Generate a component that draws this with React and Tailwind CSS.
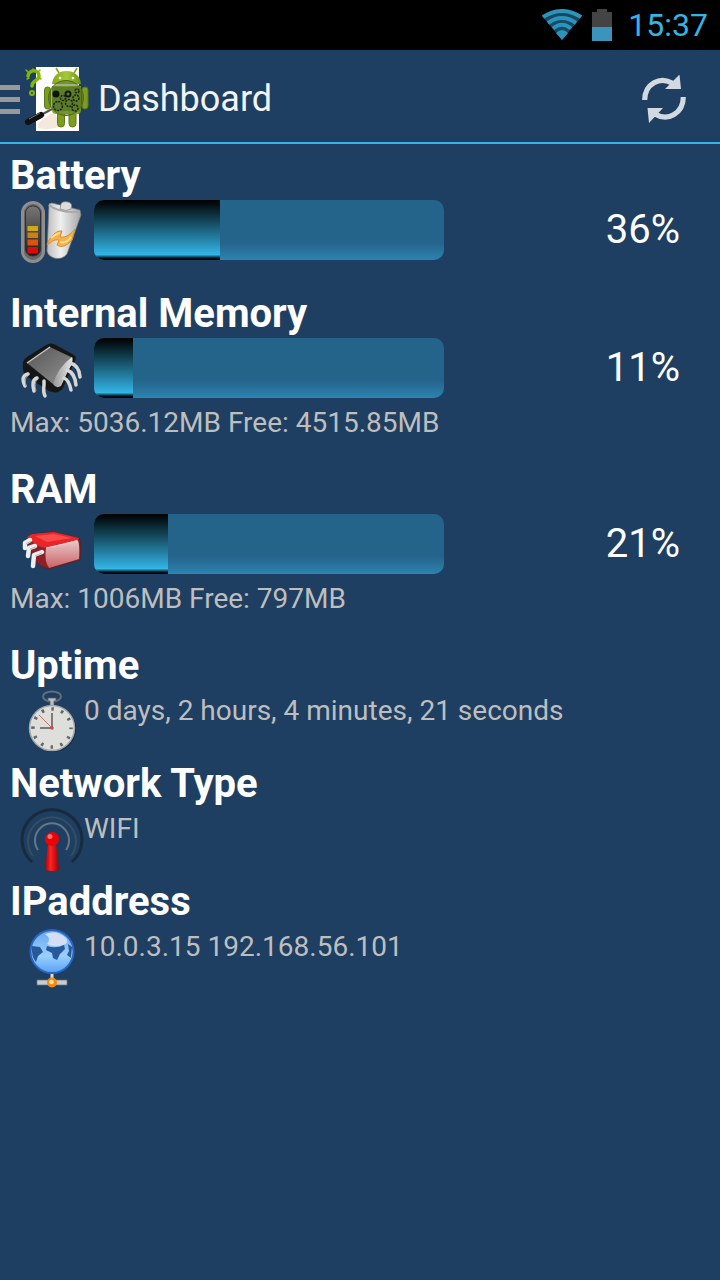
import React from "react";

function WifiIcon() {
  return (
    <svg className="h-8 w-10" viewBox="0 0 40 32" fill="none" aria-hidden="true">
      <path d="M0 7Q20 -5 40 7L20 31Z" fill="#174a60" />
      <g stroke="#2c93bd" strokeWidth="4">
        <path d="M1 8Q20 -4 39 8" />
        <path d="M6 14Q20 4 34 14" />
        <path d="M11 19.500Q20 12 29 19.500" />
      </g>
      <path d="M14 24Q20 18 26 24L20 31Z" fill="#2c93bd" />
    </svg>
  );
}

function StatusBatteryIcon() {
  return (
    <svg className="h-8 w-5" viewBox="0 0 20 32" aria-hidden="true">
      <path d="M0 3H5V0H15V3H20V18H0Z" fill="#444" />
      <path d="M0 18H20V32H0Z" fill="#3a94bb" />
    </svg>
  );
}

function LogoIcon() {
  return (
    <svg className="h-16 w-[66px]" viewBox="0 0 66 64" fill="none" aria-hidden="true">
      <defs>
        <linearGradient id="droid" x1="0" x2="1">
          <stop offset="0" stopColor="#86a51b" />
          <stop offset=".5" stopColor="#a5c936" />
          <stop offset="1" stopColor="#6f9411" />
        </linearGradient>
      </defs>
      <rect x="12" width="43" height="64" fill="#fff" />
      <path d="M14 57Q22 48 30 46L38 58Q28 64 14 61Z" fill="#f5e8dd" />
      <g stroke="#82b800" strokeLinecap="round">
        <path d="M4 9C5 2 15 2 15 9C15 14 8 13 8 19" strokeWidth="3.500" />
        <path d="M4 5L2 3M9 4V2M14 5L16 3M15 11L17 12M5 11L3 12" strokeWidth="1.500" />
        <circle cx="8" cy="26" r="2" strokeWidth="2" />
      </g>
      <path d="M35 6L32 1M50 6L53 1" stroke="#80a319" strokeWidth="1.500" />
      <path d="M28 17C29 8 35 4 42.500 4S56 8 57 17Z" fill="url(#droid)" />
      <circle cx="36" cy="11" r="1.300" fill="#fff" />
      <circle cx="49" cy="11" r="1.300" fill="#fff" />
      <g fill="#7c9d20" stroke="#5d7915">
        <rect x="20.500" y="20" width="6" height="22" rx="3" />
        <rect x="58" y="20" width="6" height="22" rx="3" />
        <rect x="33.500" y="40" width="7" height="20" rx="3.500" />
        <rect x="45" y="40" width="7" height="20" rx="3.500" />
      </g>
      <path d="M28 19H57V43Q57 47 53 47H32Q28 47 28 43Z" fill="url(#droid)" />
      <circle cx="42" cy="31" r="17.500" fill="#526f22" fillOpacity=".55" stroke="#526b21" />
      <path d="M28 20H56V44H30L28 39Z" fill="#5e7d2b" />
      <g stroke="#17220d" strokeWidth="1.500" strokeDasharray="2 1">
        <circle cx="34" cy="39" r="4.500" />
        <circle cx="45" cy="36" r="3.500" />
        <circle cx="52" cy="31" r="3" />
        <circle cx="51" cy="41" r="3" />
        <circle cx="39" cy="31" r="2.500" />
        <circle cx="53" cy="24" r="2" />
      </g>
      <circle cx="32" cy="27" r="3.500" fill="#0d1408" />
      <circle cx="44" cy="27" r="2.500" stroke="#10180a" strokeWidth="2" />
      <path d="M28 42L17 48" stroke="#555" strokeWidth="2" />
      <path d="M17 48L4 55" stroke="#111" strokeWidth="6" strokeLinecap="round" />
      <path d="M16 46L5 52" stroke="#777" />
    </svg>
  );
}

function RefreshIcon() {
  return (
    <svg className="size-12" viewBox="0 0 48 48" fill="none" aria-hidden="true">
      <path d="M4.700 25C4.700 9 20 .5 33 8.500" stroke="#d2d9e0" strokeWidth="5.200" />
      <path d="M43.300 22C43.300 38 28 47 15 39" stroke="#d2d9e0" strokeWidth="5.200" />
      <path d="M39.500 -.5L41 14H25Z M9 48L7.500 33H23Z" fill="#d2d9e0" />
    </svg>
  );
}

function BatteryIcon() {
  return (
    <svg className="size-16" viewBox="0 0 64 64" fill="none" aria-hidden="true">
      <defs>
        <linearGradient id="cell" x1="0" x2="1">
          <stop offset="0" stopColor="#bcbcbc" />
          <stop offset=".4" stopColor="#f0f0f0" />
          <stop offset="1" stopColor="#a5a5a5" />
        </linearGradient>
        <linearGradient id="well" x1="0" x2="0" y1="0" y2="1">
          <stop offset="0" stopColor="#777" />
          <stop offset="1" stopColor="#1c1c1c" />
        </linearGradient>
      </defs>
      <rect x="2.500" y="2.500" width="21" height="59" rx="10.500" fill="#666" stroke="#8e8e8e" strokeWidth="3" />
      <rect x="5.500" y="6" width="15" height="50" rx="7" fill="url(#well)" stroke="#303030" />
      <rect x="7.500" y="26" width="10.500" height="5" fill="#cba91d" />
      <rect x="7.500" y="32.500" width="10.500" height="5.500" fill="#d37c10" />
      <rect x="7.500" y="39.500" width="10.500" height="6" fill="#de520c" />
      <rect x="7.500" y="47" width="10.500" height="6.500" rx="1" fill="#e00909" />
      <path d="M29 4Q31 2 36 4L60 10L61 15L47 54Q42 60 34 58Q28 56 27 51Z" fill="url(#cell)" stroke="#777" strokeWidth=".7" />
      <path d="M29 5Q38 13 60 12" stroke="#aaa" strokeWidth="2" />
      <path d="M41 4Q42 1 48 2Q53 3 51 9Q46 12 40 9Z" fill="#ddd" stroke="#888" strokeWidth=".8" />
      <path d="M27 45C30 36 37 30 42 31L40 37C46 38 51 34 55 29L52 40C47 46 41 48 37 45L39 40C34 39 31 42 27 45Z" fill="#f6b24a" stroke="#de8b1e" />
      <path d="M31 38Q37 33 40 33M40 42Q46 44 51 37" stroke="#ffdb90" strokeWidth="2" />
    </svg>
  );
}

function ChipIcon() {
  return (
    <svg className="size-16" viewBox="0 0 64 64" fill="none" aria-hidden="true">
      <defs>
        <linearGradient id="chip" x1="0" y1="0" x2="1" y2="1">
          <stop offset="0" stopColor="#555" />
          <stop offset="1" stopColor="#929292" />
        </linearGradient>
        <linearGradient id="chipSide" x1="0" y1="0" x2="1" y2="0">
          <stop offset="0" stopColor="#999" />
          <stop offset="1" stopColor="#e6e6e6" />
        </linearGradient>
      </defs>
      <path d="M3 25Q3 22 7 19L26 7Q31 4 36 7L54 17Q57 19 55 23L43 50Q38 57 29 53L6 38Q2 34 3 25Z" fill="#161616" />
      <path d="M7 25L30 9L53 20L33 46Z" fill="url(#chip)" />
      <path d="M7 25L30 9" stroke="#c9c9c9" strokeWidth="1.500" />
      <path d="M33 46Q38 29 52 19Q54 24 48 33L41 48Q36 51 33 46Z" fill="url(#chipSide)" />
      <g stroke="#d6d6d6" strokeWidth="3.500" strokeLinecap="round">
        <path d="M8 36Q0 38 5 48" />
        <path d="M17 40Q11 42 14 53" />
        <path d="M24 43V47Q23 54 25 58" />
        <path d="M50 25Q59 27 60 39" />
        <path d="M47 32Q55 35 56 47" />
        <path d="M44 40Q49 42 51 52" />
      </g>
      <path d="M8 38Q4 39 6 48M17 42Q14 45 16 53" stroke="#999" />
    </svg>
  );
}

function RamIcon() {
  return (
    <svg className="size-16" viewBox="0 0 64 64" fill="none" aria-hidden="true">
      <defs>
        <linearGradient id="ram" x1="0" x2="0" y1="0" y2="1">
          <stop offset="0" stopColor="#e9caca" />
          <stop offset="1" stopColor="#cc6266" />
        </linearGradient>
      </defs>
      <path d="M7 23L12 20L34 18L59 24Q62 29 60 46L28 55Q20 53 13 45Z" fill="#8d2027" stroke="#502027" strokeWidth=".7" />
      <path d="M7 23L12 20L34 18L59 24L57 27L25 34Q15 32 7 23Z" fill="#e9252a" />
      <path d="M15 22L34 20L52 24L27 28Z" fill="#fa4a4a" />
      <path d="M26 34L57 26Q60 27 59 45L29 54Q24 47 26 34Z" fill="url(#ram)" />
      <path d="M26 34L57 27" stroke="#f5d5d5" />
      <g stroke="#eee" strokeWidth="4.500" strokeLinecap="round" strokeLinejoin="round">
        <path d="M10 26L5 29L5 34" />
        <path d="M15 32L9 34L8 42" />
        <path d="M22 38L14 41L13 52" />
      </g>
      <path d="M11 27L6 30M16 33L10 35M22 39L15 42" stroke="#b5b5b5" />
    </svg>
  );
}

function StopwatchIcon() {
  return (
    <svg className="size-16" viewBox="0 0 64 64" fill="none" aria-hidden="true">
      <ellipse cx="32" cy="6.500" rx="9" ry="5" stroke="#627078" strokeWidth="2" />
      <path d="M28 8H36V11H34V16H30V11H28Z" fill="#b9bec1" stroke="#556" strokeWidth=".8" />
      <circle cx="33" cy="39" r="23" fill="#112a42" />
      <circle cx="32" cy="38" r="22.500" fill="#dededb" stroke="#a3a7a8" strokeWidth="1.500" />
      <circle cx="32" cy="38" r="19" stroke="#62686b" strokeWidth="3.500" strokeDasharray="2.500 7.450" strokeDashoffset="1.250" />
      <path d="M32 38V23M32 38H20" stroke="#5b5b5b" strokeWidth="1.500" />
      <path d="M32 38L19 25" stroke="#bc7676" />
      <circle cx="32" cy="38" r="1.700" fill="#d24343" />
    </svg>
  );
}

function AntennaIcon() {
  return (
    <svg className="size-16" viewBox="0 0 64 64" fill="none" aria-hidden="true">
      <defs>
        <linearGradient id="mast" x1="0" x2="1">
          <stop offset="0" stopColor="#a90000" />
          <stop offset=".4" stopColor="#ff2424" />
          <stop offset="1" stopColor="#9b0000" />
        </linearGradient>
      </defs>
      <path d="M12 54A30 30 0 1 1 52 54" stroke="#172b3d" strokeWidth="3" />
      <path d="M13 48A24 24 0 1 1 51 48" stroke="#354d60" strokeWidth="2" />
      <path d="M18 42A17 17 0 1 1 46 42" stroke="#657783" strokeWidth="2" />
      <path d="M28 36H36L39 62Q32 64 25 62Z" fill="url(#mast)" />
      <circle cx="32" cy="31" r="7" fill="#e90505" />
      <circle cx="30" cy="28.500" r="2.500" fill="#ff7070" />
    </svg>
  );
}

function GlobeIcon() {
  return (
    <svg className="size-16" viewBox="0 0 64 64" fill="none" aria-hidden="true">
      <defs>
        <linearGradient id="sea" x1="0" x2="0" y1="0" y2="1">
          <stop offset="0" stopColor="#65a7ee" />
          <stop offset=".6" stopColor="#9bcfff" />
          <stop offset="1" stopColor="#57a2f8" />
        </linearGradient>
      </defs>
      <path d="M32 47V54" stroke="#ddd" strokeWidth="3" />
      <rect x="17" y="54" width="30" height="5" fill="#c9cccf" stroke="#66717b" strokeWidth=".7" />
      <circle cx="32" cy="25.500" r="21.500" fill="url(#sea)" stroke="#2865c2" strokeWidth="2" />
      <path d="M25 8Q37 3 46 12Q50 17 43 19Q33 22 27 18Q32 13 25 8Z" fill="#d3def5" />
      <path d="M12 20L20 21L23 26L18 30L16 36Q11 31 12 20ZM27 20Q36 23 44 19L45 23L40 28L37 34L33 32L32 27L26 24ZM48 18L52 21L51 32L47 29L49 25Z" fill="#27599a" />
      <circle cx="32" cy="56.500" r="5" fill="#f58a12" />
      <circle cx="31.500" cy="56" r="2.300" fill="#ffe28d" />
    </svg>
  );
}

function Section({ title, children }) {
  return (
    <section>
      <h2 className="text-[40px] leading-12 font-bold text-white">{title}</h2>
      {children}
    </section>
  );
}

function Meter({ title, icon, value, detail }) {
  return (
    <Section title={title}>
      <div className="flex items-start pr-[30px] pl-2.5">
        {icon}
        <div
          role="progressbar"
          aria-label={title}
          aria-valuenow={value}
          aria-valuemin={0}
          aria-valuemax={100}
          className="ml-2.5 h-15 w-[350px] overflow-hidden rounded-[10px] bg-linear-to-b from-[#24638a] from-70% to-[#2c83b1]"
        >
          <div
            className="h-full bg-[linear-gradient(#000_0%,#2fa9d7_85%,#33b5e5_91%,#001018_97%,#000_100%)]"
            style={{ width: `${value}%` }}
          />
        </div>
        <span className="ml-auto text-[40px] leading-15 text-white">{value}%</span>
      </div>
      {detail && <p className="text-[28px] leading-[42px]">{detail}</p>}
    </Section>
  );
}

function Info({ title, icon, children }) {
  return (
    <Section title={title}>
      <div className="flex items-start pl-2.5">
        {icon}
        <p className="text-[28px] leading-[42px]">{children}</p>
      </div>
    </Section>
  );
}

export default function App() {
  return (
    <div className="min-h-screen bg-[#1e3f61] font-[Roboto,sans-serif] text-[#bebebe]">
      <div className="flex h-[50px] items-center justify-end bg-black pr-3 text-[#33b5e5]">
        <WifiIcon />
        <span className="ml-2.5">
          <StatusBatteryIcon />
        </span>
        <time className="ml-4 text-[32px] leading-10">15:37</time>
      </div>
      <header className="flex h-[94px] items-center border-b-2 border-[#33b5e5] pt-1.5 pr-8">
        <button type="button" aria-label="Open menu" className="flex items-center">
          <span className="mr-1 flex w-5 flex-col gap-[7px]">
            <span className="h-[5px] bg-[#999]" />
            <span className="h-[5px] bg-[#999]" />
            <span className="h-[5px] bg-[#999]" />
          </span>
          <LogoIcon />
        </button>
        <h1 className="ml-2 text-[36px] leading-12 text-[#f3f3f3]">Dashboard</h1>
        <button type="button" aria-label="Refresh" className="ml-auto">
          <RefreshIcon />
        </button>
      </header>
      <main className="px-2.5 pt-2">
        <div className="mb-[22px] flex flex-col gap-[22px]">
          <div className="pb-1">
            <Meter title="Battery" icon={<BatteryIcon />} value={36} />
          </div>
          <Meter title="Internal Memory" icon={<ChipIcon />} value={11} detail="Max: 5036.12MB Free: 4515.85MB" />
          <Meter title="RAM" icon={<RamIcon />} value={21} detail="Max: 1006MB Free: 797MB" />
        </div>
        <div className="flex flex-col gap-1.5">
          <Info title="Uptime" icon={<StopwatchIcon />}>0 days, 2 hours, 4 minutes, 21 seconds</Info>
          <Info title="Network Type" icon={<AntennaIcon />}>WIFI</Info>
          <Info title="IPaddress" icon={<GlobeIcon />}>10.0.3.15 192.168.56.101</Info>
        </div>
      </main>
    </div>
  );
}
